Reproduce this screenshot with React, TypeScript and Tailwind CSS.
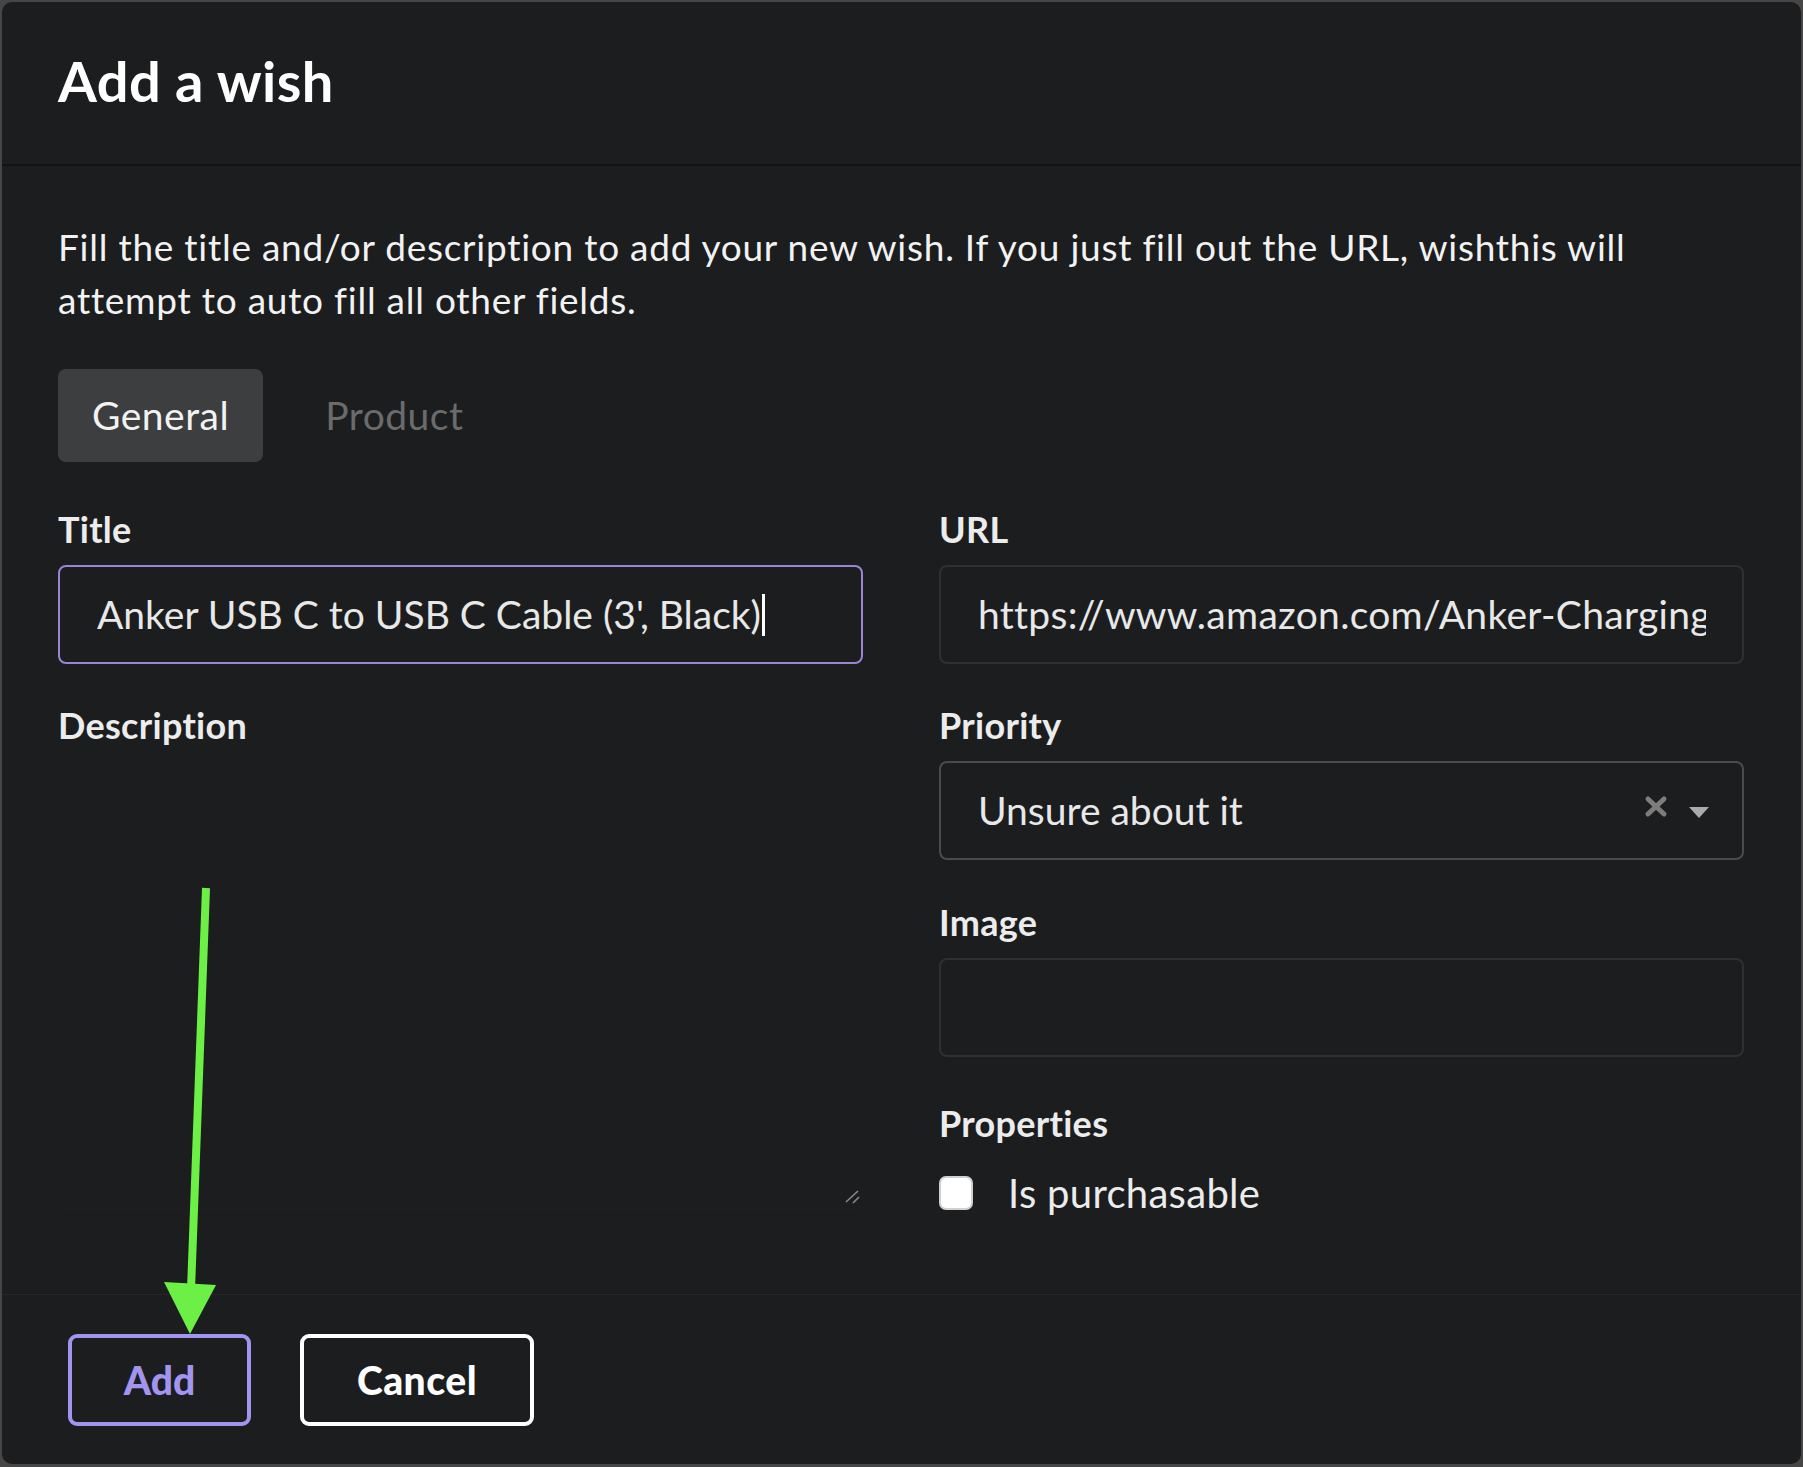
import React from "react";

const font = { fontFamily: "Lato, 'Open Sans', sans-serif" };

function Label({ children }: { children: React.ReactNode }) {
  return (
    <div className="h-[45px] flex items-center text-[36px] font-bold text-[#ececec] leading-none tracking-[0.3px]">
      {children}
    </div>
  );
}

export default function App() {
  return (
    <div
      className="w-[1803px] h-[1467px] bg-[#464646] pt-[2px] pl-[2px] relative overflow-hidden"
      style={font}
    >
      <div className="w-[1799px] h-[1462px] bg-[#1c1d1f] rounded-[10px] flex flex-col">
        {/* Header */}
        <div className="h-[164px] shrink-0 px-[56px] pb-[4px] flex items-center border-b-2 border-[#121315]">
          <h1 className="text-[56px] font-bold text-white leading-none tracking-[0.4px]">Add a wish</h1>
        </div>

        {/* Content */}
        <div className="h-[1128px] shrink-0 px-[56px] pt-[54px]">
          <p className="text-[37px] leading-[53px] text-[#f2f2f2] w-[1640px] tracking-[0.75px]">
            Fill the title and/or description to add your new wish. If you just fill out the URL, wishthis will attempt to auto fill all other fields.
          </p>

          {/* Tabs */}
          <div className="mt-[43px] flex gap-[28px]">
            <div className="h-[93px] px-[34px] rounded-[8px] bg-[#3d3e40] flex items-center text-[39px] text-[#f2f2f2] tracking-[0.5px]">
              General
            </div>
            <div className="h-[93px] px-[34px] flex items-center text-[39px] text-[#6a6b6c] tracking-[0.5px]">
              Product
            </div>
          </div>

          {/* Form */}
          <div className="mt-[44px] grid grid-cols-[805px_805px] gap-x-[76px]">
            {/* Left column */}
            <div className="flex flex-col">
              <Label>Title</Label>
              <div className="mt-[14px] h-[99px] rounded-[8px] border-2 border-[#9b84d8] flex items-center pl-[37px] text-[39px] text-[#e8e8e8]">
                <span>Anker USB C to USB C Cable (3&#39;, Black)</span>
                <span className="inline-block w-[3px] h-[42px] bg-white ml-[1px]" />
              </div>

              <div className="mt-[38px]">
                <Label>Description</Label>
              </div>
              <div className="mt-[14px] h-[448px] rounded-[6px] border border-[#1e1f21] relative">
                <svg
                  className="absolute right-[1px] bottom-[4px]"
                  width="16"
                  height="14"
                  viewBox="0 0 16 14"
                >
                  <line x1="1" y1="12" x2="13" y2="1" stroke="#8a8a8a" strokeWidth="1.6" />
                  <line x1="8" y1="13" x2="14" y2="7" stroke="#8a8a8a" strokeWidth="1.6" />
                </svg>
              </div>
            </div>

            {/* Right column */}
            <div className="flex flex-col">
              <Label>URL</Label>
              <div className="mt-[14px] h-[99px] rounded-[8px] border-2 border-[#2f3032] flex items-center pl-[37px] pr-[36px] text-[39px] text-[#e8e8e8] overflow-hidden">
                <span className="whitespace-nowrap overflow-hidden block w-full tracking-[0.3px]">
                  https://www.amazon.com/Anker-Charging-Cable-Black-3ft/dp/B088NRLMPV
                </span>
              </div>

              <div className="mt-[38px]">
                <Label>Priority</Label>
              </div>
              <div className="mt-[14px] h-[99px] rounded-[8px] border-2 border-[#4a4b4d] flex items-center pl-[37px] pr-[33px] text-[39px] text-[#e8e8e8]">
                <span className="flex-1">Unsure about it</span>
                <svg width="24" height="23" viewBox="0 0 24 23" className="mr-[21px] -mt-[8px]">
                  <line x1="4" y1="4" x2="20" y2="19" stroke="#7d7d7d" strokeWidth="5" strokeLinecap="round" />
                  <line x1="20" y1="4" x2="4" y2="19" stroke="#7d7d7d" strokeWidth="5" strokeLinecap="round" />
                </svg>
                <svg width="20" height="11" viewBox="0 0 20 11" className="mt-[4px]">
                  <polygon points="0,0 20,0 10,11" fill="#ababab" />
                </svg>
              </div>

              <div className="mt-[39px]">
                <Label>Image</Label>
              </div>
              <div className="mt-[14px] h-[99px] rounded-[8px] border-2 border-[#2f3032]" />

              <div className="mt-[43px]">
                <Label>Properties</Label>
              </div>
              <div className="mt-[28px] flex items-center">
                <div className="w-[34px] h-[34px] rounded-[7px] bg-white border-2 border-[#d0d0d1]" />
                <span className="ml-[35px] text-[40px] text-[#ececec] leading-none tracking-[0.3px]">Is purchasable</span>
              </div>
            </div>
          </div>
        </div>

        {/* Footer */}
        <div className="flex-1 border-t border-[#252628] px-[66px] pt-[39px] flex gap-[49px] items-start">
          <button className="w-[183px] h-[92px] rounded-[9px] border-[4px] border-[#a394f0] text-[39px] font-black text-[#a394f0] bg-transparent flex items-center justify-center">
            Add
          </button>
          <button className="w-[234px] h-[92px] rounded-[9px] border-[4px] border-white text-[39px] font-black text-white bg-transparent flex items-center justify-center tracking-[0.5px]">
            Cancel
          </button>
        </div>
      </div>

      {/* Green annotation arrow */}
      <svg className="absolute left-0 top-0 pointer-events-none" width="1803" height="1467">
        <line x1="206" y1="888" x2="191" y2="1290" stroke="#6cf046" strokeWidth="8" />
        <polygon points="164,1282 216,1285 190,1334" fill="#6cf046" />
      </svg>
    </div>
  );
}
